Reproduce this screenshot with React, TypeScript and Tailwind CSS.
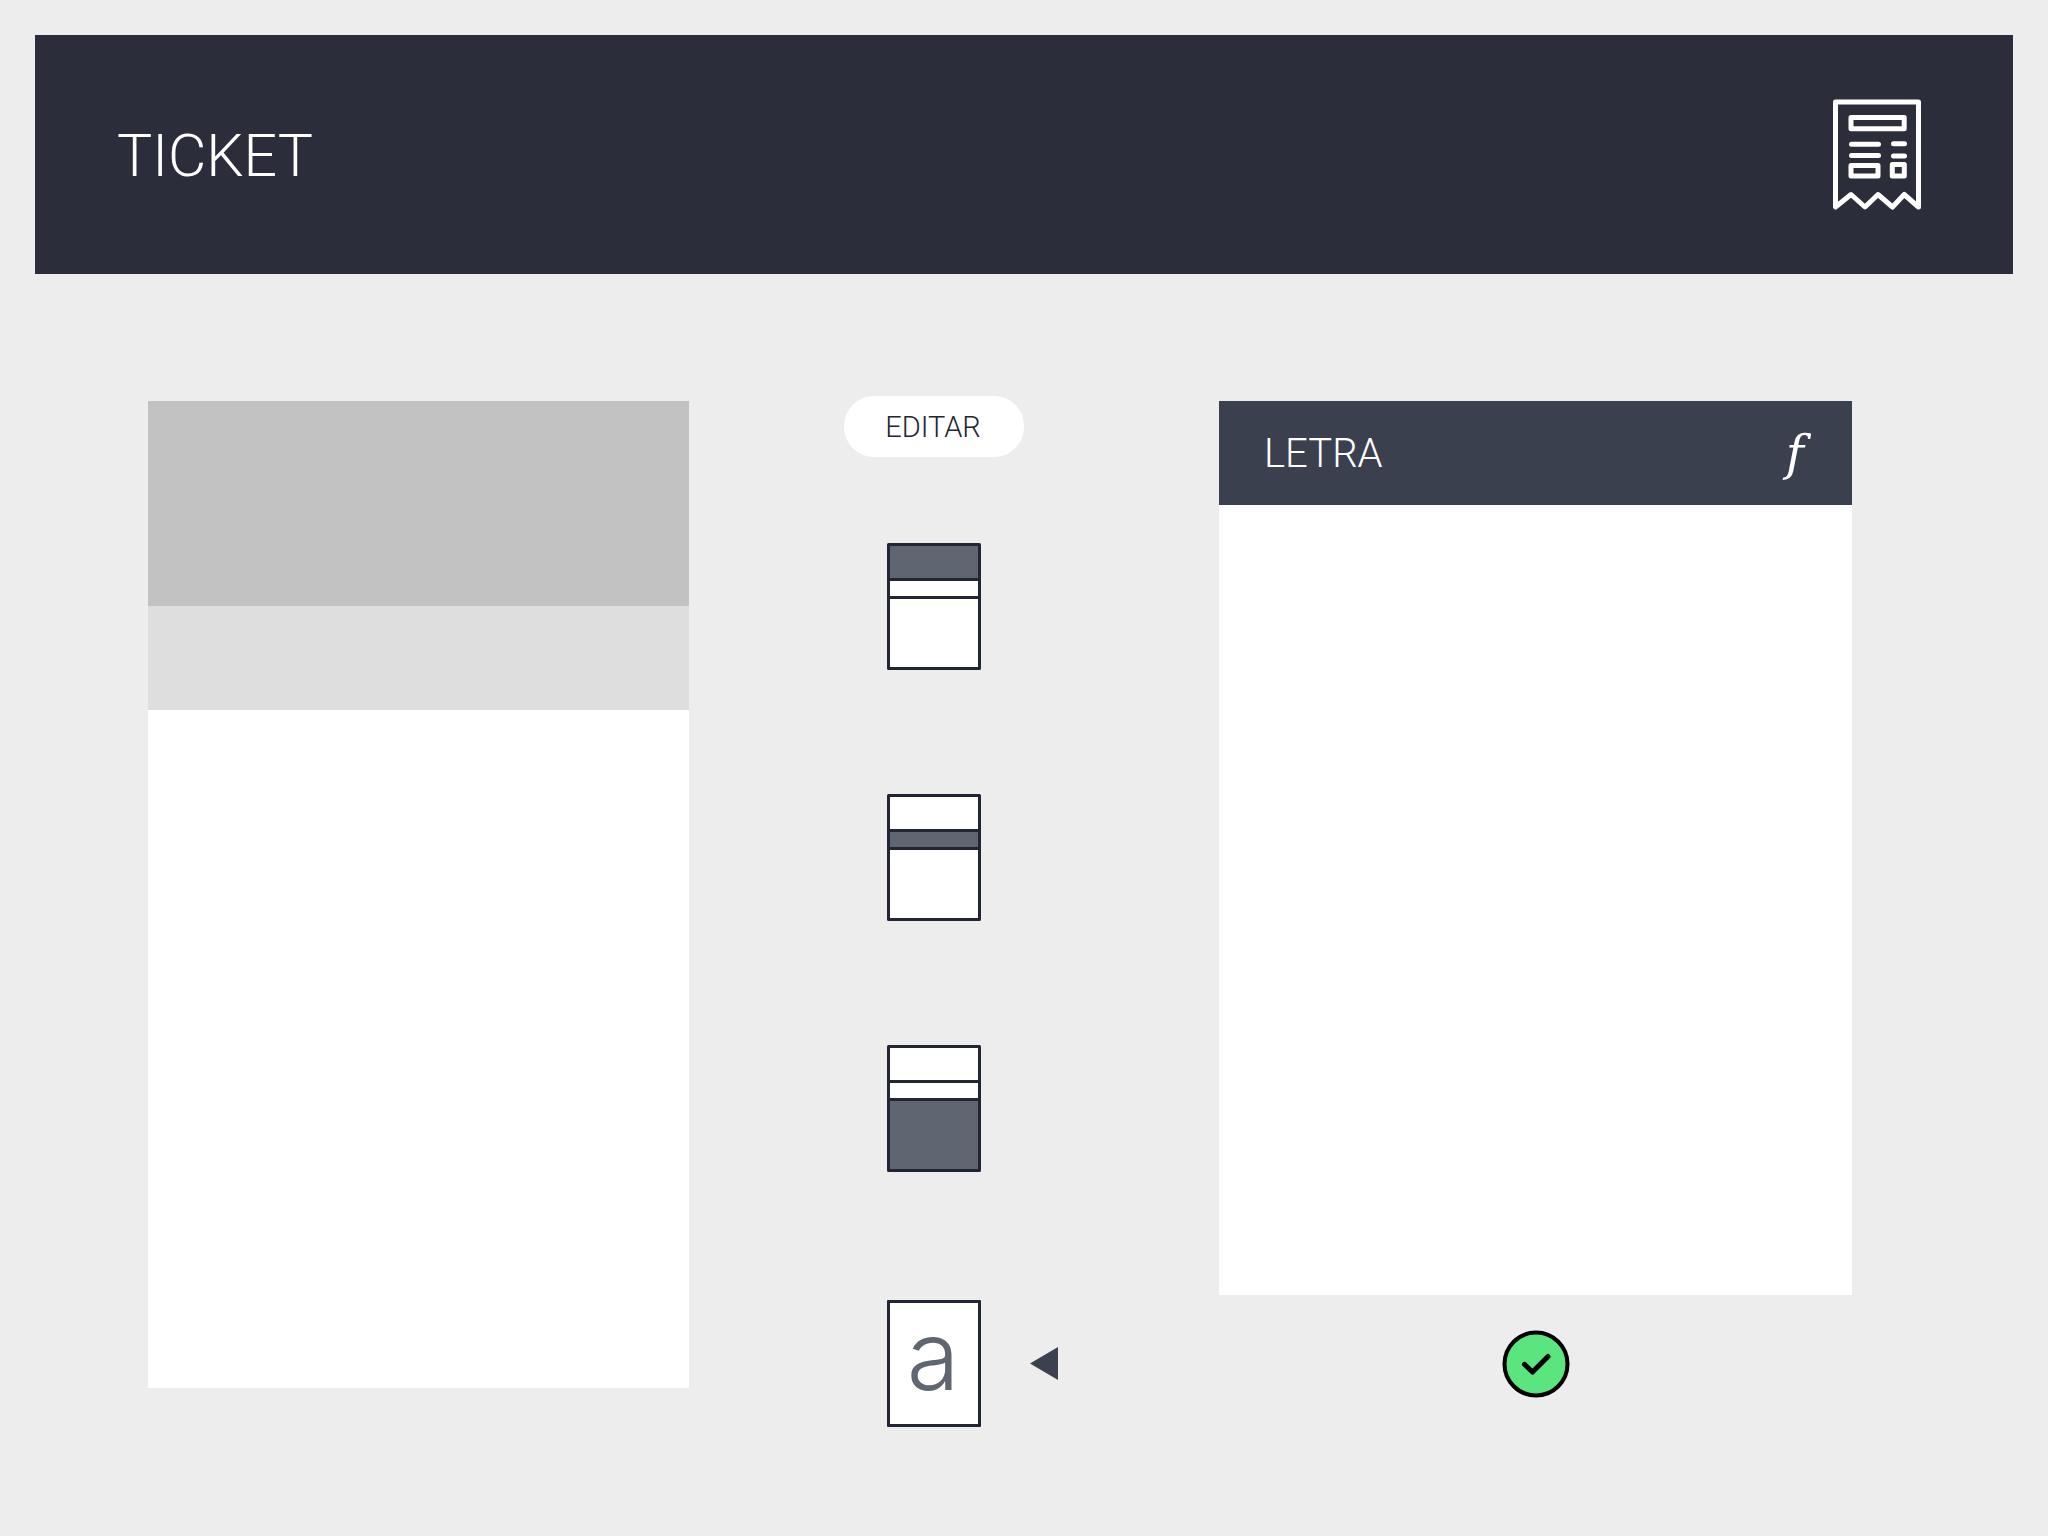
import React from "react";

type Section = "header" | "subheader" | "body";

const sections: { id: Section; label: string }[] = [
  { id: "header", label: "Editar cabecera" },
  { id: "subheader", label: "Editar subcabecera" },
  { id: "body", label: "Editar cuerpo" },
];

function ReceiptIcon() {
  return (
    <svg
      width="88"
      height="111"
      viewBox="0 0 88 111"
      fill="none"
      stroke="#ffffff"
      strokeWidth="5"
      strokeLinecap="round"
      strokeLinejoin="round"
      aria-hidden="true"
    >
      <path d="M2.5 2.9H85.5V108L71.2 95.5L59.5 108L45 95.5L32 108L18 95.5L2.5 108Z" />
      <rect x="18" y="18.5" width="53.2" height="11.2" />
      <path d="M18.5 45.2H45.5M60.5 44.8H71.5M18.5 56.6H45.5M60.5 57H71.5" />
      <rect x="18" y="66.4" width="27" height="10.6" />
      <rect x="59.3" y="65.5" width="12" height="11.5" />
    </svg>
  );
}

function SectionThumb({ active }: { active: Section }) {
  const fill = (id: Section) => (active === id ? "#606671" : "#ffffff");
  return (
    <svg width="94" height="127" viewBox="0 0 94 127" stroke="#222533" strokeWidth="3" aria-hidden="true">
      <rect x="1.5" y="1.5" width="91" height="35" fill={fill("header")} stroke="none" />
      <rect x="1.5" y="36.5" width="91" height="18" fill={fill("subheader")} stroke="none" />
      <rect x="1.5" y="54.5" width="91" height="71" fill={fill("body")} stroke="none" />
      <rect x="1.5" y="1.5" width="91" height="124" fill="none" strokeLinejoin="round" />
      <path d="M1.5 36.5H92.5M1.5 54.5H92.5" />
    </svg>
  );
}

export default function App() {
  return (
    <div className="min-h-screen bg-[#ededed] p-[35px] font-['Roboto',sans-serif] font-light">
      <header className="flex h-[239px] items-center justify-between bg-[#2c2d3a] pr-[92px] pl-[82px]">
        <h1 className="pt-[2px] text-[59px] leading-none text-white">TICKET</h1>
        <ReceiptIcon />
      </header>

      <main className="flex items-start pt-[122px] pr-[161px] pl-[113px]">
        <section aria-label="Ticket" className="mt-[5px] flex-[541] bg-white">
          <div className="h-[205px] bg-[#c2c2c2]" />
          <div className="h-[104px] bg-[#dedede]" />
          <div className="h-[678px]" />
        </section>

        <nav aria-label="Editar" className="mr-[195px] ml-[155px] flex w-[180px] flex-col items-center">
          <button
            type="button"
            className="mb-[86px] h-[61px] w-full rounded-[30px] bg-white pt-[2px] pr-[2px] text-[29px] leading-none text-[#222533]"
          >
            EDITAR
          </button>
          <div className="flex flex-col gap-[124px]">
            {sections.map((section) => (
              <button key={section.id} type="button" aria-label={section.label} className="block">
                <SectionThumb active={section.id} />
              </button>
            ))}
          </div>
          <div className="relative mt-[128px]">
            <button
              type="button"
              aria-pressed="true"
              className="flex h-[127px] w-[94px] items-center justify-center rounded-[1px] border-3 border-[#222533] bg-white pr-[2px] pb-[18px] font-['Inter',sans-serif] text-[96px] leading-none text-[#606671]"
            >
              a
            </button>
            <svg
              width="28"
              height="33"
              viewBox="0 0 28 33"
              className="absolute top-[47px] left-full ml-[49px]"
              aria-hidden="true"
            >
              <path d="M28 0V33L0 16.5Z" fill="#3b414e" />
            </svg>
          </div>
        </nav>

        <section aria-label="Letra" className="mt-[5px] flex flex-[633] flex-col items-center">
          <div className="w-full bg-white">
            <div className="flex h-[104px] items-center justify-between bg-[#3b404e] pr-[48px] pl-[45px] text-white">
              <h2 className="pt-[2px] text-[40px] leading-none">LETRA</h2>
              <span className="font-['DejaVu_Serif',serif] text-[49px] leading-none font-normal italic">f</span>
            </div>
            <div className="h-[790px]" />
          </div>
          <button type="button" aria-label="Aceptar" className="mt-[35px]">
            <svg width="68" height="68" viewBox="0 0 68 68" aria-hidden="true">
              <circle cx="34" cy="34" r="31.5" fill="#5ae57f" stroke="#000000" strokeWidth="4" />
              <path
                d="M22.5 34.3L30.5 42L46 26.5"
                fill="none"
                stroke="#000000"
                strokeWidth="5"
                strokeLinecap="round"
                strokeLinejoin="round"
              />
            </svg>
          </button>
        </section>
      </main>
    </div>
  );
}
